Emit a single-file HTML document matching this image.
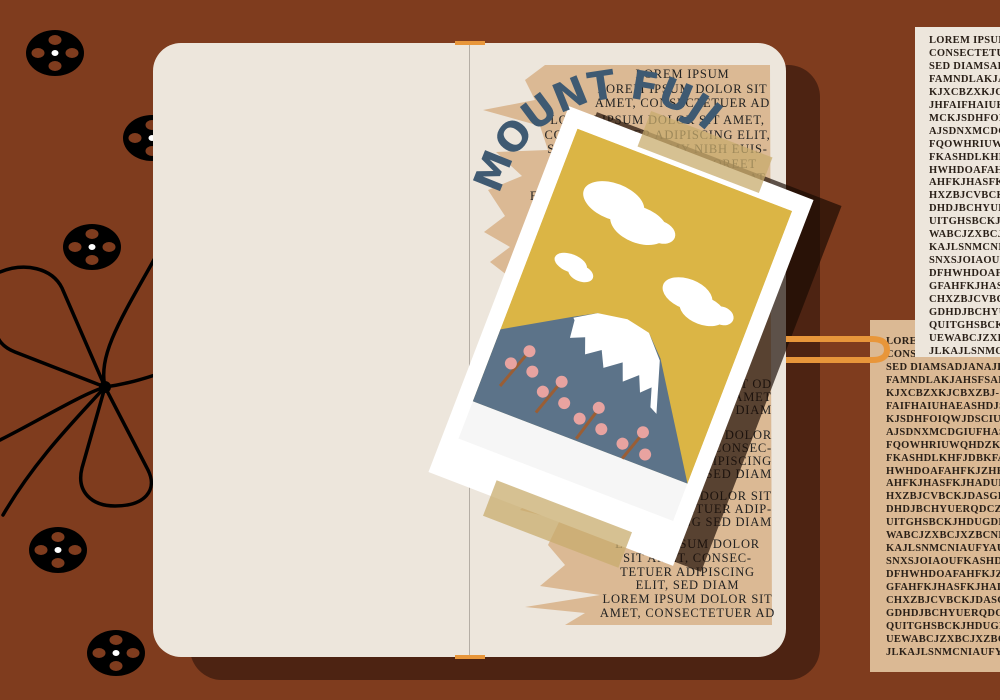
<!DOCTYPE html>
<html><head><meta charset="utf-8"><style>
*{margin:0;padding:0;box-sizing:border-box}
body{width:1000px;height:700px;overflow:hidden;background:#7f3c1e;position:relative;font-family:"Liberation Serif",serif}
.abs{position:absolute}
.txt{font-family:"Liberation Serif",serif;text-transform:uppercase;color:#222;font-size:12.5px;line-height:14.6px;white-space:nowrap;letter-spacing:0.8px}
.paper{font-size:10.5px;line-height:12.95px;color:#2a2018;padding:8px 0 0 14px;overflow:hidden;letter-spacing:0.3px;font-weight:bold}
</style></head><body>

<svg class="abs" style="left:0;top:0" width="1000" height="700">
 <defs>
  <g id="reel"><ellipse cx="0" cy="0" rx="29" ry="23" fill="#000"/>
   <ellipse cx="0" cy="-13" rx="6.5" ry="5" fill="#7f3c1e"/><ellipse cx="0" cy="13" rx="6.5" ry="5" fill="#7f3c1e"/>
   <ellipse cx="-17" cy="0" rx="6.5" ry="5" fill="#7f3c1e"/><ellipse cx="17" cy="0" rx="6.5" ry="5" fill="#7f3c1e"/>
   <ellipse cx="0" cy="0" rx="3.5" ry="3" fill="#fff"/></g>
 </defs>
 <use href="#reel" x="55" y="53"/><use href="#reel" x="152" y="138"/><use href="#reel" x="92" y="247"/>
 <use href="#reel" x="58" y="550"/><use href="#reel" x="116" y="653"/>
 <g fill="none" stroke="#000" stroke-width="3.5" stroke-linecap="round">
  <path d="M105,387 L62,288 C52,268 25,262 0,272"/>
  <path d="M105,387 L15,352 C5,348 0,342 -2,338"/>
  <path d="M105,387 L82,468 C76,492 92,506 115,506 C145,506 158,490 148,470 Z"/>
  <path d="M105,387 C80,395 40,420 0,440"/>
  <path d="M105,387 C75,420 35,460 3,515"/>
  <path d="M105,387 C120,385 140,380 155,375"/>
  <path d="M105,387 C98,355 120,320 155,258"/>
 </g>
 <circle cx="105" cy="387" r="6" fill="#000"/>
</svg>

<div class="abs" style="left:190px;top:65px;width:630px;height:615px;background:#4d2312;border-radius:32px"></div>
<div class="abs" style="left:153px;top:43px;width:633px;height:614px;background:#ede6dc;border-radius:28px"></div>
<div class="abs" style="left:469px;top:43px;width:1px;height:614px;background:#b5aea5"></div>
<div class="abs" style="left:455px;top:41px;width:30px;height:4px;background:#e8963a"></div>
<div class="abs" style="left:455px;top:655px;width:30px;height:4px;background:#e8963a"></div>

<svg class="abs" style="left:0;top:0" width="1000" height="700">
 <polygon fill="#dbb994" points="545,65 770,65 772,625 565,625 585,613 525,607 600,595 540,586 565,565 548,545 560,520 520,510 540,490 500,300 520,285 490,262 510,247 484,232 505,216 488,190 522,176 496,152 548,150 540,126 483,110 535,100 525,80"/>
</svg>

<div class="abs txt" style="left:590px;top:67px;width:185px;text-align:center">Lorem ipsum<br>Lorem ipsum dolor sit<br>amet, consectetuer ad</div>
<div class="abs txt" style="left:540px;top:113px;width:235px;text-align:center">Lorem ipsum dolor sit amet,<br>consectetuer adipiscing elit,<br>sed diam nonummy nibh euis-<br>mod tincidunt ut laoreet<br>dolore magna aliquam erat</div>
<div class="abs txt" style="left:530px;top:190px;width:245px;text-align:left;line-height:13px">Erat volutpat. Ut wisi<br>quis nostrud exerci<br>dolore magna</div>
<div class="abs txt" style="left:560px;top:378px;width:212px;text-align:right;line-height:12.8px">tincidunt ut laoreet od<br>dolore magna sit amet<br>elit, sed diam<br>&nbsp;<br>lorem ipsum dolor<br>sit amet, consec-<br>tetuer adipiscing<br>sed diam</div>
<div class="abs txt" style="left:560px;top:490px;width:212px;text-align:right;line-height:13px">lorem dolor sit<br>consectetuer adip-<br>iscing sed diam</div>
<div class="abs txt" style="left:595px;top:538px;width:185px;text-align:center;line-height:13.8px">lorem ipsum dolor<br>sit amet, consec-<br>tetuer adipiscing<br>elit, sed diam<br>lorem ipsum dolor sit<br>amet, consectetuer ad</div>

<div class="abs" style="left:518px;top:146px;width:262px;height:392px;background:rgba(25,10,3,0.68);transform:rotate(21deg)"></div>
<div class="abs" style="left:490px;top:140px;width:262px;height:392px;background:#fff;transform:rotate(21deg)">
 <svg class="abs" style="left:16px;top:18px" width="230" height="355" viewBox="0 0 230 355">
  <rect width="230" height="292" fill="#dbb545"/>
  <rect y="292" width="230" height="40" fill="#f6f6f6"/>
  <polygon fill="#5c7389" points="0,215 62,178 85,165 140,165 160,185 230,292 0,292"/>
  <polygon fill="#fff" points="64,178 85,165 115,160 140,165 160,187 176,238 168,234 162,215 153,224 146,208 133,220 126,202 110,214 102,198 88,208 82,192 68,198 66,180"/>
  <g fill="#fff">
   <ellipse cx="60" cy="55" rx="32" ry="18"/><ellipse cx="92" cy="68" rx="30" ry="18"/><ellipse cx="114" cy="67" rx="16" ry="11"/>
   <ellipse cx="42" cy="128" rx="17" ry="9"/><ellipse cx="55" cy="134" rx="13" ry="8"/>
   <ellipse cx="162" cy="115" rx="26" ry="15"/><ellipse cx="182" cy="125" rx="24" ry="14"/><ellipse cx="202" cy="123" rx="12" ry="9"/>
  </g>
  <g stroke="#9a5e35" stroke-width="3">
   <line x1="20" y1="268" x2="35" y2="225"/><line x1="63" y1="280" x2="75" y2="244"/><line x1="110" y1="290" x2="120" y2="255"/><line x1="160" y1="292" x2="170" y2="262"/>
  </g>
  <g fill="#e8a3a0">
   <circle cx="35" cy="225" r="6"/><circle cx="22" cy="243" r="6"/><circle cx="45" cy="243" r="6"/>
   <circle cx="76" cy="242" r="6"/><circle cx="62" cy="258" r="6"/><circle cx="86" cy="261" r="6"/>
   <circle cx="120" cy="253" r="6"/><circle cx="106" cy="270" r="6"/><circle cx="130" cy="272" r="6"/>
   <circle cx="170" cy="260" r="6"/><circle cx="155" cy="278" r="6"/><circle cx="180" cy="280" r="6"/>
  </g>
 </svg>
</div>
<div class="abs" style="left:640px;top:133px;width:130px;height:38px;background:rgba(200,172,110,0.75);transform:rotate(21deg)"></div>
<div class="abs" style="left:485px;top:505px;width:145px;height:38px;background:rgba(200,172,110,0.75);transform:rotate(21deg)"></div>

<svg class="abs" style="left:0;top:0" width="1000" height="700">
 <path id="arc" d="M500,195 A125,125 0 0 1 715,140" fill="none"/>
 <text font-family="'DejaVu Sans',sans-serif" font-weight="bold" font-size="40" fill="#3f5a72" letter-spacing="-1"><textPath href="#arc">MOUNT FUJI</textPath></text>
</svg>

<div class="abs txt paper" style="left:870px;top:320px;width:130px;height:352px;background:#dbb994;padding-top:16px;padding-left:16px">Lorem ipsum dolor<br>consectetuer<br>sed diamsadjanajd<br>famndlakjahsfsahf<br>kjxcbzxkjcbxzbj-<br>faifhaiuhaeashdjs<br>kjsdhfoiqwjdsciuh<br>ajsdnxmcdgiufhas<br>fqowhriuwqhdzkj<br>fkashdlkhfjdbkfa<br>hwhdoafahfkjzhf<br>ahfkjhasfkjhaduf<br>hxzbjcvbckjdasgd<br>dhdjbchyuerqdcz<br>uitghsbckjhdugdh<br>wabcjzxbcjxzbcnb<br>kajlsnmcniaufyau<br>snxsjoiaoufkashd<br>dfhwhdoafahfkjz<br>gfahfkjhasfkjhad<br>chxzbjcvbckjdasg<br>gdhdjbchyuerqdc<br>quitghsbckjhdugd<br>uewabcjzxbcjxzbc<br>jlkajlsnmcniaufya</div>
<div class="abs txt paper" style="left:915px;top:27px;width:85px;height:330px;background:#ede6dc;padding-top:8px">Lorem ipsum dolor<br>consectetuer<br>sed diamsadjana<br>famndlakjahs<br>kjxcbzxkjcbx<br>jhfaifhaiuhae<br>mckjsdhfoiqw<br>ajsdnxmcdgiu<br>fqowhriuwqh<br>fkashdlkhfjd<br>hwhdoafahfk<br>ahfkjhasfkjh<br>hxzbjcvbckjd<br>dhdjbchyuerq<br>uitghsbckjhd<br>wabcjzxbcjxz<br>kajlsnmcniau<br>snxsjoiaoufk<br>dfhwhdoafahf<br>gfahfkjhasfk<br>chxzbjcvbckj<br>gdhdjbchyuer<br>quitghsbckjh<br>uewabcjzxbcj<br>jlkajlsnmcni</div>

<svg class="abs" style="left:0;top:0" width="1000" height="700">
 <path d="M786,339 L872,339 Q887,339 887,350 Q887,360 872,360 L786,360" fill="none" stroke="#e8963a" stroke-width="6"/>
</svg>

</body></html>
